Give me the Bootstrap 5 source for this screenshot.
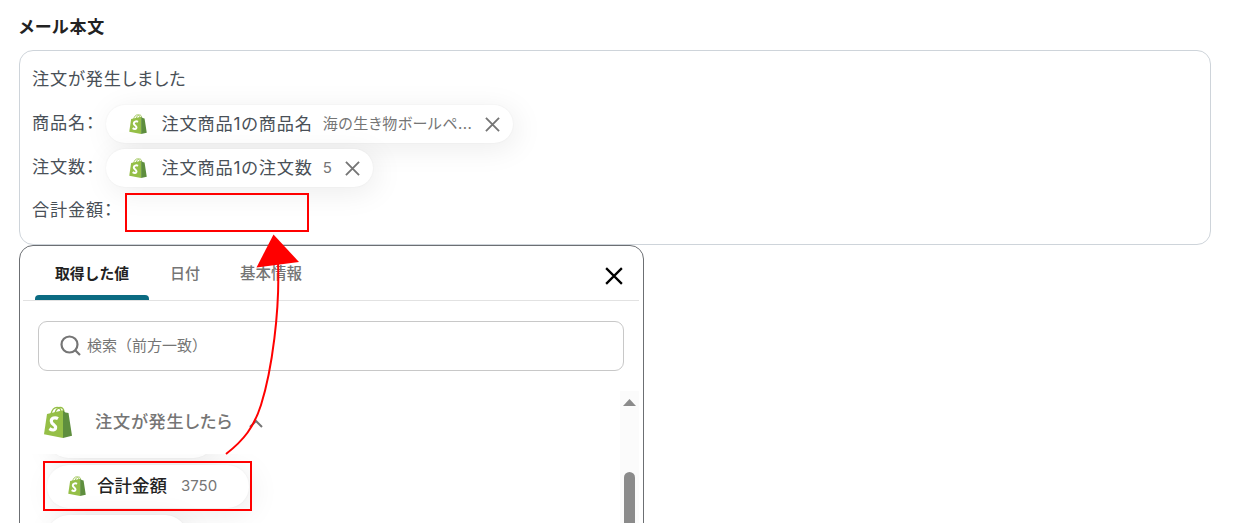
<!DOCTYPE html>
<html lang="ja">
<head>
    <meta charset="UTF-8">
    <meta name="viewport" content="width=device-width, initial-scale=1">
    <title>メール本文</title>
    <link href="https://cdn.jsdelivr.net/npm/bootstrap@5.3.3/dist/css/bootstrap.min.css" rel="stylesheet">
    <style>
      body {
        font-family: Inter, "Noto Sans CJK JP", sans-serif;
        font-size: 17.200px;
        color: #495057;
        height: 523px;
        overflow: hidden;
      }
      .palt { font-feature-settings: "palt"; }
      .page { height: 523px; overflow: hidden; padding: 12px 42px 0 19px; }
      .field-label { font-size: 17px; letter-spacing: .75px; line-height: 30px; height: 38px; font-weight: 700; color: #222; }
      .mail-body {
        height: 195px;
        border: 1px solid #ced4da;
        border-radius: 14px;
        padding: 5px 12px 0;
        letter-spacing: .83px;
      }
      .mail-row { height: 44px; white-space: nowrap; }
      .mail-row.first-row { height: 45px; }
      .mail-row.last-row { height: 41px; }
      .chip {
        height: 38px;
        border-radius: 19px;
        background: #fff;
        box-shadow: 4px 5px 30px rgba(0, 0, 0, .08), 0 0 2px rgba(0, 0, 0, .06);
      }
      .mail-row .chip { margin: 2px 0 0 11px; padding: 0 13px 0 23px; }
      .mail-row .chip-value { margin-right: 13px; }
      .chip-value { font-size: 15px; letter-spacing: 0; color: #757575; }
      .mail-row .product-value { font-size: 15px; letter-spacing: .45px; }
      .chip-name { margin-left: 14px; margin-right: 10px; }

      .picker {
        width: 625px;
        height: 300px;
        border: 1px solid #6c6f73;
        border-radius: 14px;
        padding: 0 4px 0 3px;
        background: #fff;
      }
      .picker-head { height: 55px; border-bottom: 1px solid #e2e2e2; padding: 0 16px 0 12px; }
      .picker-tab {
        font-size: 15px;
        line-height: 52px;
        padding-top: 2px;
        color: #757575;
        position: relative;
      }
      .date-tab { margin-left: 21px; font-weight: 500; }
      .info-tab { margin-left: 40px; font-size: 15.500px; font-weight: 500; }
      .picker-tab.current { width: 114px; text-align: center; font-size: 14.800px; color: #222; font-weight: 700; }
      .picker-tab.current::after {
        content: "";
        position: absolute;
        left: 0;
        right: 0;
        bottom: 0;
        height: 5px;
        border-radius: 4px 4px 0 0;
        background: #0b6b82;
      }
      .picker-close { margin-top: 5px; }
      .search-box {
        margin: 20px 15px 0;
        height: 50px;
        border: 1px solid #c8c8c8;
        border-radius: 9px;
        padding: 0 0 2px 21px;
        font-size: 15px;
        color: #757575;
      }
      .search-box span { margin: 2px 0 0 6px; }
      .picker-list { margin-top: 20px; height: 140px; }
      .group-head { height: 63px; padding: 0 0 2px 21px; letter-spacing: .8px; color: #757575; font-weight: 500; }
      .group-name { margin: 0 16px 0 23px; }
      .group-caret { margin-top: 3px; }
      .chip-list { height: 75px; overflow: hidden; padding-left: 24px; }
      .chip-list .chip { height: 43px; border-radius: 22px; margin-bottom: 7px; }
      .chip-prev { width: 168px; margin-top: -39px; }
      .chip-total { width: 202px; padding: 0 0 2px 21px; }
      .chip-total .chip-name { margin: 1px 14px 0 11px; font-size: 17.500px; font-weight: 500; color: #222; }
      .chip-total .chip-value { margin-top: 2px; }
      .chip-next { width: 140px; }
      .scroll-track { width: 19px; background: #fbfbfb; padding-top: 8px; }
      .scroll-track svg { flex-shrink: 0; }
      .scroll-thumb { width: 11px; height: 80px; margin-top: 66px; border-radius: 6px; background: #8b8b8b; }
      .annotations { left: 0; top: 0; }
    </style>
</head>
<body class="bg-white position-relative">

<svg width="0" height="0" class="position-absolute">
  <symbol id="bag" viewBox="0 0 28 32">
    <path d="M7 8C8 4 10.500 1.300 13 1.300c2.800 0 4 2.200 4 5M11 7c1-3.500 3-5.500 5.500-5.500 2 0 3 1.500 3.500 4" fill="none" stroke="#95bf47" stroke-width="1.300"/>
    <path d="M3 8 19 4.300V32L0 28.200z" fill="#95bf47"/>
    <path d="M19 4.300 21.500 6.500l3 .5L28 29.800l-9 2.200z" fill="#5e8e3e"/>
    <path d="M14 12.600C11 10.800 7.200 12.200 7.300 15.200c.1 3.100 4.500 3.500 4.300 6.500-.2 2.700-3.200 3-6.200 1" fill="none" stroke="#fff" stroke-width="3.200"/>
  </symbol>
  <symbol id="cross" viewBox="0 0 16 16">
    <path d="M1 1l14 14M15 1L1 15" fill="none" stroke="currentColor" stroke-width="2"/>
  </symbol>
</svg>

<main class="page">
    <div class="field-label palt">メール本文</div>

    <!-- Mail body -->
    <div class="mail-body palt">
        <div class="mail-row first-row d-flex align-items-center">注文が発生しました</div>
        <div class="mail-row d-flex align-items-center">
            <span>商品名：</span>
            <div class="chip d-flex align-items-center">
                <svg width="18" height="20"><use href="#bag"/></svg>
                <span class="chip-name">注文商品1の商品名</span>
                <span class="chip-value product-value">海の生き物ボールペ...</span>
                <svg width="15" height="15" color="#757575"><use href="#cross"/></svg>
            </div>
        </div>
        <div class="mail-row d-flex align-items-center">
            <span>注文数：</span>
            <div class="chip d-flex align-items-center">
                <svg width="18" height="20"><use href="#bag"/></svg>
                <span class="chip-name">注文商品1の注文数</span>
                <span class="chip-value">5</span>
                <svg width="15" height="15" color="#757575"><use href="#cross"/></svg>
            </div>
        </div>
        <div class="mail-row last-row d-flex align-items-center">合計金額：</div>
    </div>

    <!-- Value picker -->
    <div class="picker">
        <div class="picker-head d-flex align-items-center">
            <div class="picker-tab current">取得した値</div>
            <div class="picker-tab date-tab">日付</div>
            <div class="picker-tab info-tab">基本情報</div>
            <svg class="picker-close ms-auto" width="18" height="18" color="#000"><use href="#cross"/></svg>
        </div>
        <div class="search-box d-flex align-items-center">
            <svg width="21" height="21" viewBox="0 0 21 21" fill="none" stroke="#757575" stroke-width="2.200">
                <circle cx="9.500" cy="9.500" r="8"/>
                <path d="M15 15l5 5"/>
            </svg>
            <span>検索（前方一致）</span>
        </div>
        <div class="picker-list d-flex">
            <div class="flex-grow-1">
                <div class="group-head d-flex align-items-center palt">
                    <svg width="28" height="32"><use href="#bag"/></svg>
                    <span class="group-name">注文が発生したら</span>
                    <svg class="group-caret" width="14" height="9" viewBox="0 0 14 9"><path d="M1 8l6-6 6 6" fill="none" stroke="#757575" stroke-width="2"/></svg>
                </div>
                <div class="chip-list palt">
                    <div class="chip chip-prev"></div>
                    <div class="chip chip-total d-flex align-items-center">
                        <svg width="18" height="20"><use href="#bag"/></svg>
                        <span class="chip-name">合計金額</span>
                        <span class="chip-value">3750</span>
                    </div>
                    <div class="chip chip-next"></div>
                </div>
            </div>
            <div class="scroll-track d-flex flex-column align-items-center">
                <svg width="13" height="7"><path d="M0 7L6.500 0 13 7z" fill="#8b8b8b"/></svg>
                <div class="scroll-thumb flex-shrink-0"></div>
            </div>
        </div>
    </div>
</main>

<!-- Red frames and arrow over the form -->
<svg class="annotations position-absolute" width="1253" height="523" fill="none" stroke="#f00" stroke-width="2">
    <rect x="126" y="194" width="182" height="37"/>
    <rect x="44" y="462" width="207" height="48"/>
    <path d="M226 454C244 440 254 427 261 405C272 370 280 310 278 262"/>
    <path d="M273.500 234.500L299 262L256.500 267.500z" fill="#f00" stroke="none"/>
</svg>

<script src="https://cdn.jsdelivr.net/npm/bootstrap@5.3.3/dist/js/bootstrap.bundle.min.js"></script>
</body>
</html>
